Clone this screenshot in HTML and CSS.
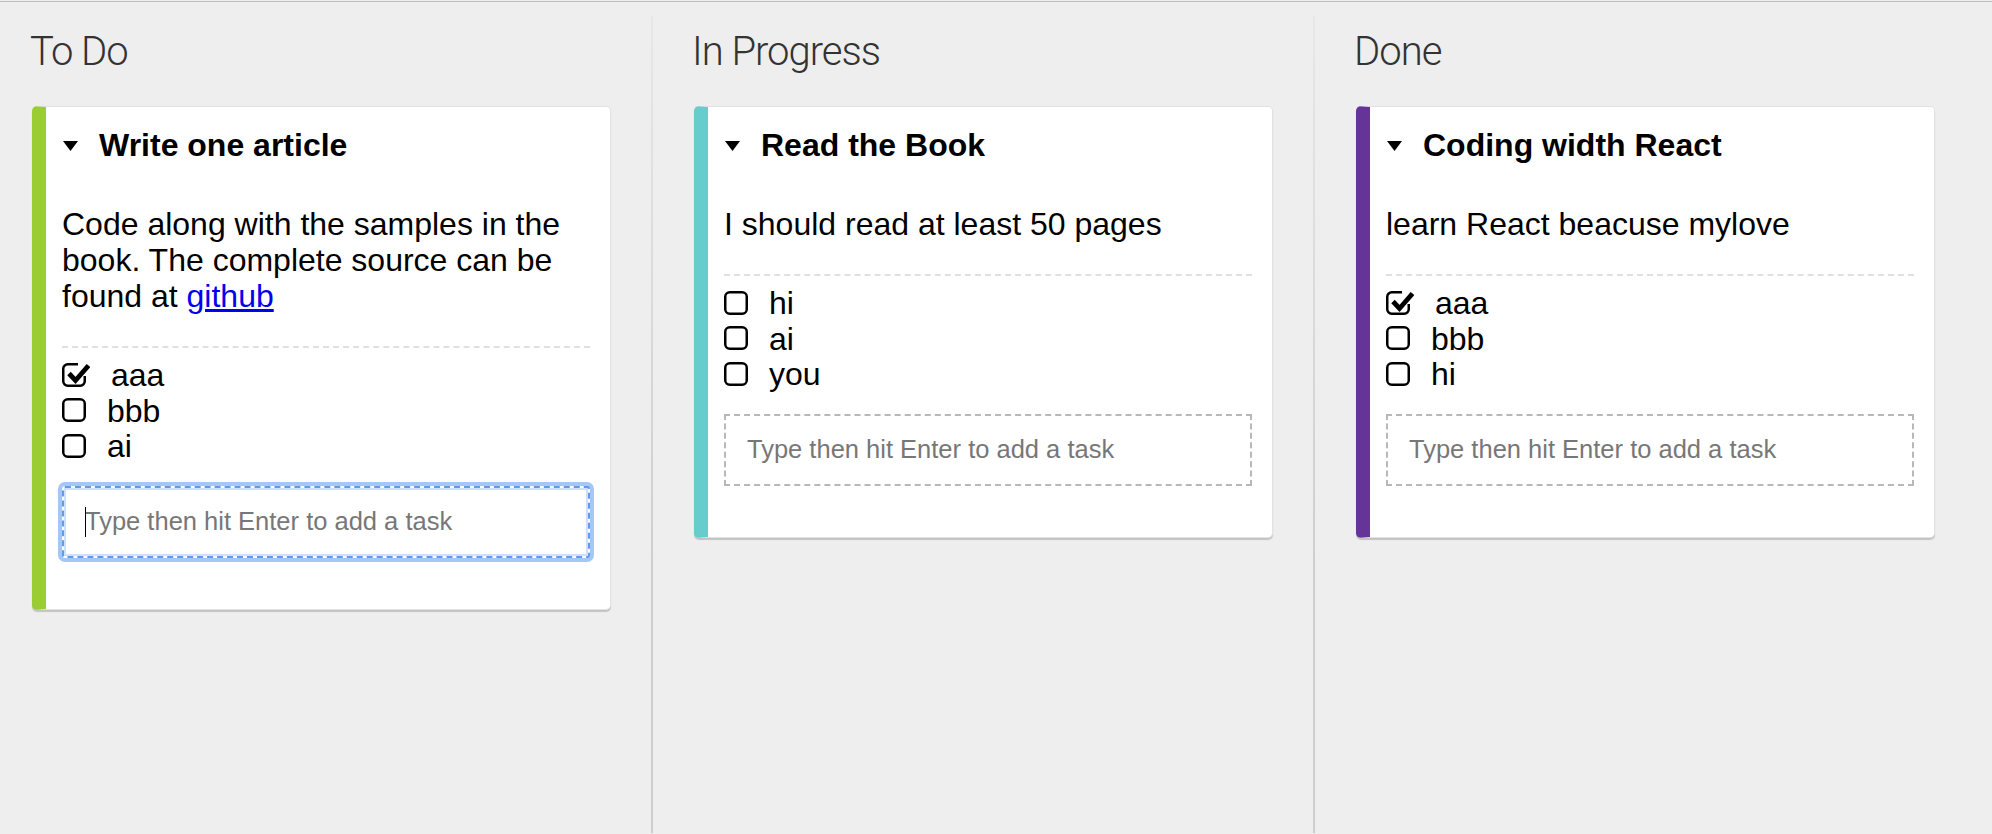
FILE: index.html
```html
<!DOCTYPE html>
<html lang="en">
<head>
<meta charset="utf-8">
<title>Kanban</title>
<link rel="stylesheet" href="styles.css">
</head>
<body>
<div class="board">
  <section class="column column--first">
    <h2 class="column-title">To Do</h2>
    <div class="card card--green">
      <div class="card-title">
        <svg class="toggle" width="15" height="10" viewBox="0 0 15 10"><polygon points="0,0 15,0 7.5,10" fill="#000"/></svg>
        <span>Write one article</span>
      </div>
      <p class="card-desc">Code along with the samples in the book. The complete source can be found at <a href="#">github</a></p>
      <div class="checklist">
        <div class="task">
          <svg class="box box--checked" width="28" height="24" viewBox="0 0 28 24"><path d="M16 1.25 H5.75 a4.5 4.5 0 0 0 -4.5 4.5 V18.25 a4.5 4.5 0 0 0 4.5 4.5 H18.25 a4.5 4.5 0 0 0 4.5 -4.5 V13" fill="none" stroke="#000" stroke-width="2.5"/><path d="M7 10.5 L13.5 17.5 L26.5 2.5" fill="none" stroke="#000" stroke-width="4.8" stroke-linejoin="miter"/></svg>
          <span>aaa</span>
        </div>
        <div class="task">
          <svg class="box" width="24" height="24" viewBox="0 0 24 24"><rect x="1.25" y="1.25" width="21.5" height="21.5" rx="4.5" fill="none" stroke="#000" stroke-width="2.5"/></svg>
          <span>bbb</span>
        </div>
        <div class="task">
          <svg class="box" width="24" height="24" viewBox="0 0 24 24"><rect x="1.25" y="1.25" width="21.5" height="21.5" rx="4.5" fill="none" stroke="#000" stroke-width="2.5"/></svg>
          <span>ai</span>
        </div>
      </div>
      <div class="task-input-wrap is-focused">
        <input class="task-input" type="text" placeholder="Type then hit Enter to add a task">
      </div>
    </div>
  </section>

  <section class="column">
    <h2 class="column-title">In Progress</h2>
    <div class="card card--teal">
      <div class="card-title">
        <svg class="toggle" width="15" height="10" viewBox="0 0 15 10"><polygon points="0,0 15,0 7.5,10" fill="#000"/></svg>
        <span>Read the Book</span>
      </div>
      <p class="card-desc">I should read at least 50 pages</p>
      <div class="checklist">
        <div class="task">
          <svg class="box" width="24" height="24" viewBox="0 0 24 24"><rect x="1.25" y="1.25" width="21.5" height="21.5" rx="4.5" fill="none" stroke="#000" stroke-width="2.5"/></svg>
          <span>hi</span>
        </div>
        <div class="task">
          <svg class="box" width="24" height="24" viewBox="0 0 24 24"><rect x="1.25" y="1.25" width="21.5" height="21.5" rx="4.5" fill="none" stroke="#000" stroke-width="2.5"/></svg>
          <span>ai</span>
        </div>
        <div class="task">
          <svg class="box" width="24" height="24" viewBox="0 0 24 24"><rect x="1.25" y="1.25" width="21.5" height="21.5" rx="4.5" fill="none" stroke="#000" stroke-width="2.5"/></svg>
          <span>you</span>
        </div>
      </div>
      <div class="task-input-wrap">
        <input class="task-input" type="text" placeholder="Type then hit Enter to add a task">
      </div>
    </div>
  </section>

  <section class="column">
    <h2 class="column-title">Done</h2>
    <div class="card card--purple">
      <div class="card-title">
        <svg class="toggle" width="15" height="10" viewBox="0 0 15 10"><polygon points="0,0 15,0 7.5,10" fill="#000"/></svg>
        <span>Coding width React</span>
      </div>
      <p class="card-desc">learn React beacuse mylove</p>
      <div class="checklist">
        <div class="task">
          <svg class="box box--checked" width="28" height="24" viewBox="0 0 28 24"><path d="M16 1.25 H5.75 a4.5 4.5 0 0 0 -4.5 4.5 V18.25 a4.5 4.5 0 0 0 4.5 4.5 H18.25 a4.5 4.5 0 0 0 4.5 -4.5 V13" fill="none" stroke="#000" stroke-width="2.5"/><path d="M7 10.5 L13.5 17.5 L26.5 2.5" fill="none" stroke="#000" stroke-width="4.8" stroke-linejoin="miter"/></svg>
          <span>aaa</span>
        </div>
        <div class="task">
          <svg class="box" width="24" height="24" viewBox="0 0 24 24"><rect x="1.25" y="1.25" width="21.5" height="21.5" rx="4.5" fill="none" stroke="#000" stroke-width="2.5"/></svg>
          <span>bbb</span>
        </div>
        <div class="task">
          <svg class="box" width="24" height="24" viewBox="0 0 24 24"><rect x="1.25" y="1.25" width="21.5" height="21.5" rx="4.5" fill="none" stroke="#000" stroke-width="2.5"/></svg>
          <span>hi</span>
        </div>
      </div>
      <div class="task-input-wrap">
        <input class="task-input" type="text" placeholder="Type then hit Enter to add a task">
      </div>
    </div>
  </section>
</div>
</body>
</html>
```
FILE: styles.css
```css
html {
  background: #eeeeee;
}

body {
  margin: 1px 0 0;
  background: #eeeeee;
  font-family: "Liberation Sans", Arial, Helvetica, sans-serif;
  color: #000;
}

.board {
  display: flex;
  align-items: stretch;
  border-top: 1px solid #bdbdbd;
  padding-top: 14px;
  min-height: calc(100vh - 2px);
  box-sizing: border-box;
}

.column {
  flex: none;
  width: 579px;
  padding: 0 40px 0 41px;
  border-left: 2px solid #d6d6d6;
  border-image: linear-gradient(to bottom, #e7e7e7 0%, #dadada 35%, #cdcdcd 70%, #cdcdcd 100%) 1;
}

.column--first {
  padding-left: 32px;
  border-left: none;
}

.column-title {
  margin: 12px 0 30px -2px;
  font-family: Roboto, "Open Sans", sans-serif;
  font-weight: 300;
  font-size: 40px;
  line-height: 48px;
  color: #333;
  letter-spacing: -1px;
}

.card {
  background: #fff;
  border: 1px solid #e2e2e2;
  border-left: 14px solid #9acd32;
  border-radius: 5px;
  box-shadow: 0 2px 1px rgba(0, 0, 0, 0.18);
  padding: 20px 20px 51px 16px;
}

.card--green { border-left-color: #9acd32; }
.card--teal { border-left-color: #66cccc; }
.card--purple { border-left-color: #663399; }

.card-title {
  display: flex;
  align-items: center;
  font-size: 32px;
  line-height: 37px;
  font-weight: bold;
}

.toggle {
  flex: none;
  margin: 1px 21px 0 1px;
}

.card-desc {
  margin: 42px 0 32px;
  font-size: 32px;
  line-height: 36px;
}

.card-desc a {
  color: #0000ee;
  text-decoration: underline;
}

.checklist {
  border-top: 2px dashed #e0e0e0;
  padding-top: 10px;
}

.task {
  display: flex;
  align-items: center;
  height: 35.5px;
  font-size: 32px;
  line-height: 35.5px;
}

.box {
  flex: none;
  margin-right: 21px;
  position: relative;
  top: -1px;
}

.task-input-wrap {
  position: relative;
  margin-top: 21px;
}

.task-input {
  display: block;
  box-sizing: border-box;
  width: 100%;
  height: 72px;
  margin: 0;
  padding: 0 21px;
  border: 2px dashed #b8b8b8;
  border-radius: 0;
  background: #fff;
  font-family: "Liberation Sans", Arial, sans-serif;
  font-size: 25.5px;
  color: #333;
  outline: none;
}

.task-input::placeholder {
  color: #777;
}

.is-focused .task-input {
  border-color: #5d9de6;
  border-radius: 3px;
  box-shadow: 0 0 0 4px #a3c7f7, inset 0 0 0 2px #cfe1fa;
}

.is-focused::before {
  content: "";
  position: absolute;
  left: 23px;
  top: 21px;
  width: 1px;
  height: 30px;
  background: #000;
  z-index: 1;
}
```
